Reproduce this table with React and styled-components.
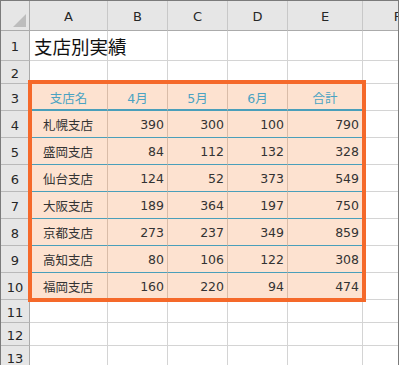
import React from "react";
import styled, { createGlobalStyle, css } from "styled-components";

const GlobalStyle = createGlobalStyle`
  html, body {
    margin: 0;
    padding: 0;
    background: #ffffff;
  }
  body {
    font-family: "DejaVu Sans", "Noto Sans CJK JP", sans-serif;
  }
`;

const COLUMNS = ["A", "B", "C", "D", "E", "F"];

const branches = [
  { name: "札幌支店", values: [390, 300, 100, 790] },
  { name: "盛岡支店", values: [84, 112, 132, 328] },
  { name: "仙台支店", values: [124, 52, 373, 549] },
  { name: "大阪支店", values: [189, 364, 197, 750] },
  { name: "京都支店", values: [273, 237, 349, 859] },
  { name: "高知支店", values: [80, 106, 122, 308] },
  { name: "福岡支店", values: [160, 220, 94, 474] },
];

const headers = ["支店名", "4月", "5月", "6月", "合計"];

// the sheet is wider than the window: column F runs past the right edge
const Sheet = styled.div`
  position: relative;
  box-sizing: border-box;
  width: 399px;
  height: 365px;
  overflow: hidden;
  border: 1px solid #7b7b7b;
  border-bottom: none;
  display: grid;
  grid-template-columns: 29px 78px 60px 60px 60px 75px 70px;
  grid-template-rows: 30px 30px 23px 27px repeat(7, 27px) 23px 23px 23px;
  font-family: "DejaVu Sans", "Noto Sans CJK JP", sans-serif;
`;

const Corner = styled.div`
  box-sizing: border-box;
  background: #e6e6e6;
  border-right: 1px solid #ababab;
  border-bottom: 1px solid #ababab;
  display: flex;
  align-items: flex-end;
  justify-content: flex-end;
  padding: 0 3px 3px 0;
`;

const ColHead = styled.div`
  box-sizing: border-box;
  background: #e6e6e6;
  border-right: 1px solid #c8c8c8;
  border-bottom: 1px solid #ababab;
  display: flex;
  align-items: center;
  justify-content: center;
  font-size: 13px;
  color: #262626;
  padding-top: 2px;
`;

const RowHead = styled.div`
  box-sizing: border-box;
  background: #e6e6e6;
  border-right: 1px solid #ababab;
  border-bottom: 1px solid #b9b9b9;
  display: flex;
  align-items: center;
  justify-content: center;
  font-size: 13px;
  color: #262626;
  padding-top: 2px;
`;

const Cell = styled.div`
  box-sizing: border-box;
  background: #ffffff;
  border-right: 1px solid #d4d4d4;
  border-bottom: 1px solid #d4d4d4;
  display: flex;
  align-items: center;
  white-space: nowrap;
  font-size: 12.5px;
  color: #333333;
  ${(p) =>
    p.$title &&
    css`
      font-size: 18.5px;
      color: #111111;
      padding-left: 4px;
      position: relative;
      z-index: 1;
    `}
`;

const TableCell = styled.div`
  box-sizing: border-box;
  background: #fde2d0;
  border-right: 1px solid #d9bca8;
  border-bottom: ${(p) => (p.$head ? "2px solid #4a9fba" : "1px solid #4a9fba")};
  display: flex;
  align-items: center;
  white-space: nowrap;
  font-size: 12.5px;
  color: ${(p) => (p.$head ? "#4aa2c2" : "#333333")};
  justify-content: ${(p) =>
    p.$head ? "center" : p.$num ? "flex-end" : "flex-start"};
  padding: ${(p) => (p.$num ? "1px 3px 0 0" : p.$head ? "1px 0 0" : "1px 0 0 13px")};
`;

const Highlight = styled.div`
  position: absolute;
  left: 27px;
  top: 79px;
  width: 338px;
  height: 222px;
  box-sizing: border-box;
  border: 4px solid #f5692a;
  pointer-events: none;
`;

const CornerMark = () => (
  <svg width="13" height="13" viewBox="0 0 13 13">
    <polygon points="13,0 13,13 0,13" fill="#bdbdbd" />
  </svg>
);

const blankRow = (key) => COLUMNS.map((c) => <Cell key={`${key}-${c}`} />);

export default function App() {
  return (
    <>
      <GlobalStyle />
      <Sheet>
        <Corner>
          <CornerMark />
        </Corner>
        {COLUMNS.map((c) => (
          <ColHead key={c}>{c}</ColHead>
        ))}

        <RowHead>1</RowHead>
        <Cell $title>支店別実績</Cell>
        {COLUMNS.slice(1).map((c) => (
          <Cell key={`1-${c}`} />
        ))}

        <RowHead>2</RowHead>
        {blankRow(2)}

        <RowHead>3</RowHead>
        {headers.map((h) => (
          <TableCell key={h} $head>
            {h}
          </TableCell>
        ))}
        <Cell />

        {branches.map((b, r) => (
          <React.Fragment key={b.name}>
            <RowHead>{r + 4}</RowHead>
            <TableCell>{b.name}</TableCell>
            {b.values.map((v, i) => (
              <TableCell key={i} $num>
                {v}
              </TableCell>
            ))}
            <Cell />
          </React.Fragment>
        ))}

        {[11, 12, 13].map((n) => (
          <React.Fragment key={n}>
            <RowHead>{n}</RowHead>
            {blankRow(n)}
          </React.Fragment>
        ))}

        <Highlight />
      </Sheet>
    </>
  );
}
